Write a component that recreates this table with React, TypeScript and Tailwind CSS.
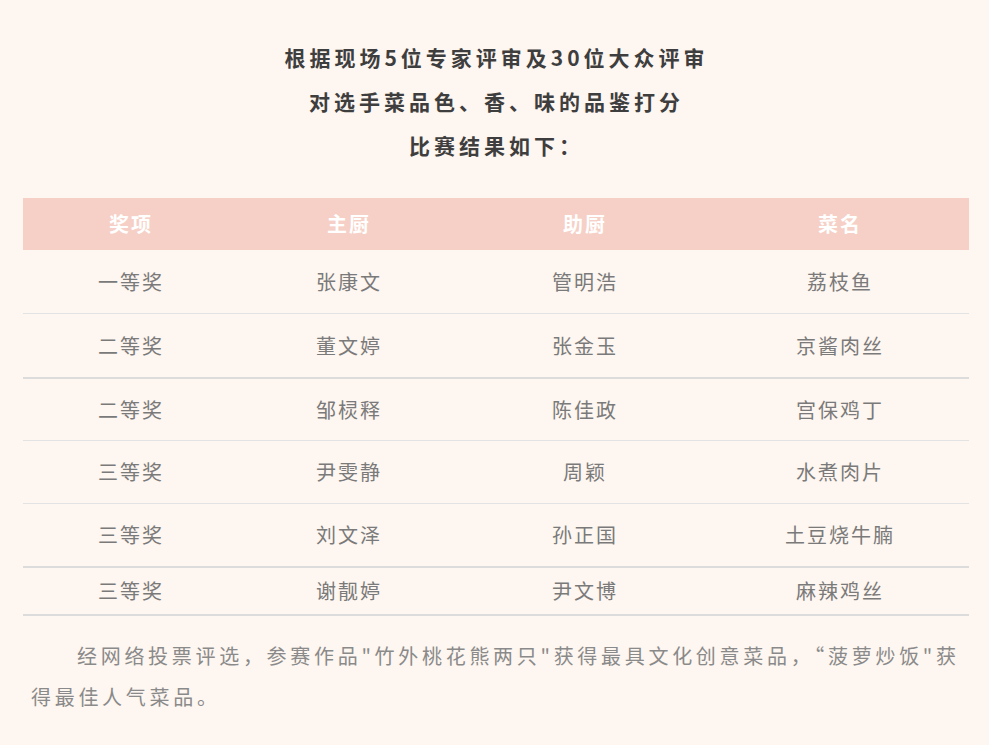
import React from 'react';

const ROWS = [
  { award: '一等奖', chef: '张康文', assistant: '管明浩', dish: '荔枝鱼', h: 'h-[63px]', line: 'border-b border-[#e3e3e3]' },
  { award: '二等奖', chef: '董文婷', assistant: '张金玉', dish: '京酱肉丝', h: 'h-[63px]', line: 'border-b-2 border-[#dcdcdc]' },
  { award: '二等奖', chef: '邹棂释', assistant: '陈佳政', dish: '宫保鸡丁', h: 'h-[61px]', line: 'border-b border-[#e3e3e3]' },
  { award: '三等奖', chef: '尹雯静', assistant: '周颖', dish: '水煮肉片', h: 'h-[62px]', line: 'border-b border-[#e3e3e3]' },
  { award: '三等奖', chef: '刘文泽', assistant: '孙正国', dish: '土豆烧牛腩', h: 'h-[62px]', line: 'border-b-2 border-[#dcdcdc]' },
  { award: '三等奖', chef: '谢靓婷', assistant: '尹文博', dish: '麻辣鸡丝', h: 'h-[46px]', line: 'border-b-2 border-[#dcdcdc]' },
];

const HEADERS = ['奖项', '主厨', '助厨', '菜名'];

const App: React.FC = () => {
  return (
    <div
      className="min-h-[745px] bg-[#fef6f0]"
      style={{ fontFamily: '"Noto Sans CJK SC", "Noto Sans", sans-serif' }}
    >
      {/* Heading */}
      <div className="pt-[35px] pl-[4px] text-center text-[21px] font-bold leading-[44px] tracking-[4px] text-[#3e3e3e]">
        <p>根据现场5位专家评审及30位大众评审</p>
        <p>对选手菜品色、香、味的品鉴打分</p>
        <p>比赛结果如下：</p>
      </div>

      {/* Results table */}
      <div className="mx-[23px] mt-[31px] w-[946px]">
        <div className="grid h-[52px] grid-cols-[216px_220px_252px_258px] items-center bg-[#f6d0c6] text-center text-[20px] font-bold tracking-[2px] text-white">
          {HEADERS.map((h) => (
            <div key={h}>{h}</div>
          ))}
        </div>
        {ROWS.map((row, i) => (
          <div
            key={i}
            className={`box-content grid grid-cols-[216px_220px_252px_258px] items-center text-center text-[20px] tracking-[2px] text-[#7a7a7a] ${row.h} ${row.line}`}
          >
            <div>{row.award}</div>
            <div>{row.chef}</div>
            <div>{row.assistant}</div>
            <div>{row.dish}</div>
          </div>
        ))}
      </div>

      {/* Note */}
      <p className="mt-[19px] pl-[31px] pr-[24px] indent-[46px] text-[20px] leading-[41px] tracking-[3.7px] text-[#8a8a8a]">
        经网络投票评选，参赛作品"竹外桃花熊两只"获得最具文化创意菜品，“菠萝炒饭"获得最佳人气菜品。
      </p>
    </div>
  );
};

export default App;
